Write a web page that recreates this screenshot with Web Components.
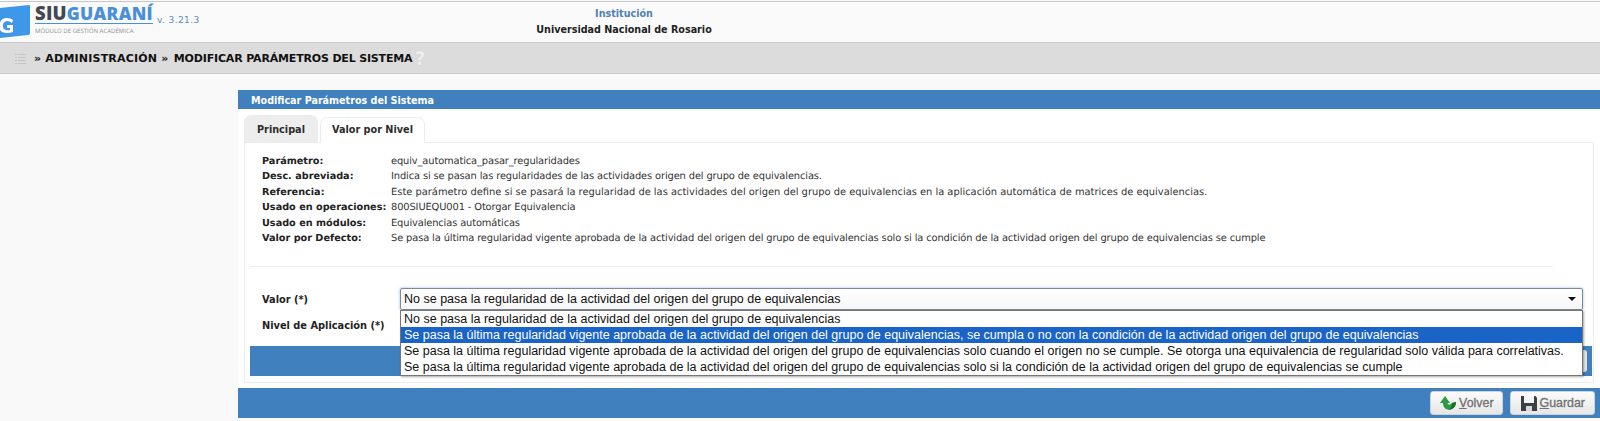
<!DOCTYPE html>
<html>
<head>
<meta charset="utf-8">
<title>Modificar Parámetros del Sistema</title>
<style>
  html, body { margin: 0; padding: 0; height: 421px; overflow: hidden; background: #f9f9f9; }
  body { font-family: "DejaVu Sans", Verdana, sans-serif; font-size: 10px; color: #222; }
</style>
</head>
<body>
<siu-header></siu-header>
<siu-crumbs></siu-crumbs>
<siu-panel>
  <siu-tabs></siu-tabs>
  <siu-box>
    <siu-info></siu-info>
    <siu-form></siu-form>
  </siu-box>
</siu-panel>

<script>
class SiuHeader extends HTMLElement {
  connectedCallback() {
    this.attachShadow({mode: 'open'}).innerHTML = `
      <style>
        :host {
          display: flex;
          height: 40px;
          margin-top: 1px;
          border-top: 1px solid #c8c8c8;
          background: #fafafa;
        }
        .brand { width: 474px; display: flex; align-items: flex-start; }
        svg { display: block; flex: none; margin-top: 1px; }
        .names { margin-left: 5px; width: 118px; }
        .name {
          font: 800 18.5px/19px "Open Sans", sans-serif;
          letter-spacing: .2px;
          color: #434852;
          height: 20px;
          padding-top: 1px;
          white-space: nowrap;
          border-bottom: 1px solid #4a90d9;
        }
        .name span { color: #4a90d9; font-size: 17.5px; letter-spacing: .3px; }
        .sub { font: 6.05px/12px "Open Sans", sans-serif; text-rendering: geometricPrecision; color: #8f8f8f; white-space: nowrap; margin-top: 1px; }
        .ver { margin: 13px 0 0 4px; font-size: 9px; color: #5b8fc0; letter-spacing: .4px; }
        .inst { width: 300px; text-align: center; font-weight: bold; font-size: 9.6px; padding-top: 5px; box-sizing: border-box; }
        .inst div:first-child { color: #4f81b3; height: 16px; line-height: 13px; }
        .inst div:last-child { color: #222; line-height: 13px; }
      </style>
      <div class="brand">
        <svg width="30" height="35" viewBox="0 0 30 35">
          <path d="M0 5 L29 2 Q30 2 30 3 L30 30 Q30 32 28 32 L0 35 Z" fill="#3f97ea"/>
          <path d="M13 17 Q11 15 7 15 Q1 15 0 20 L0 27 Q2 30 7 30 Q10 30 13 29 L13 22 L7 22 L7 25 L10 25 L10 27 Q4 28 3 24 Q2 19 7 18 Q10 18 12 20 Z" fill="#fff"/>
        </svg>
        <div class="names">
          <div class="name">SIU<span>GUARANÍ</span></div>
          <div class="sub">MÓDULO DE GESTIÓN ACADÉMICA</div>
        </div>
        <div class="ver">v. 3.21.3</div>
      </div>
      <div class="inst">
        <div>Institución</div>
        <div>Universidad Nacional de Rosario</div>
      </div>
    `;
  }
}
customElements.define('siu-header', SiuHeader);

class SiuCrumbs extends HTMLElement {
  connectedCallback() {
    this.attachShadow({mode: 'open'}).innerHTML = `
      <style>
        :host {
          display: flex;
          align-items: center;
          height: 30px;
          border-top: 1px solid #c9c9c9;
          border-bottom: 1px solid #c9c9c9;
          background: #dcdcdc;
          padding-left: 15px;
          font-weight: bold;
          font-size: 11px;
          color: #111;
          white-space: nowrap;
        }
        svg { display: block; margin-right: 8px; }
        .a { letter-spacing: .2px; }
        .b { letter-spacing: -.17px; margin-left: 4px; word-spacing: 0; }
        .b i { font-style: normal; margin-right: 2px; }
        .q { font: bold 19px/20px "DejaVu Sans", sans-serif; color: #eee; text-shadow: 0 0 1px #bbb; margin-left: 2px; }
      </style>
      <svg width="11" height="11" viewBox="0 0 11 11" fill="#c4c4c4">
        <rect x="0" y="1" width="2" height="1"/><rect x="3" y="1" width="8" height="1"/>
        <rect x="0" y="4" width="2" height="1"/><rect x="3" y="4" width="8" height="1"/>
        <rect x="0" y="7" width="2" height="1"/><rect x="3" y="7" width="8" height="1"/>
        <rect x="0" y="10" width="2" height="1"/><rect x="3" y="10" width="8" height="1"/>
      </svg>
      <span class="a">» ADMINISTRACIÓN</span><span class="b"><i>»</i> MODIFICAR PARÁMETROS DEL SISTEMA</span><span class="q">?</span>
    `;
  }
}
customElements.define('siu-crumbs', SiuCrumbs);

class SiuPanel extends HTMLElement {
  connectedCallback() {
    this.attachShadow({mode: 'open'}).innerHTML = `
      <style>
        :host { display: block; margin: 16px 0 0 238px; }
        .title {
          height: 19px;
          line-height: 22px;
          background: #4180be;
          color: #fff;
          font-weight: bold;
          font-size: 9.6px;
          padding-left: 13px;
        }
        .body {
          background: #fff;
          padding: 6px 6px 5px 6px;
        }
        .foot {
          height: 30px;
          background: #4180be;
          display: flex;
          justify-content: flex-end;
          align-items: center;
          gap: 7px;
          padding-right: 5px;
        }
      </style>
      <div class="title">Modificar Parámetros del Sistema</div>
      <div class="body"><slot></slot></div>
      <div class="foot">
        <siu-button label="Volver" key="V" icon="back"></siu-button>
        <siu-button label="Guardar" key="G" icon="save"></siu-button>
      </div>
    `;
  }
}
customElements.define('siu-panel', SiuPanel);

class SiuButton extends HTMLElement {
  connectedCallback() {
    const label = this.getAttribute('label');
    const key = this.getAttribute('key');
    const icons = {
      back: `<svg width="16" height="14" viewBox="0 0 16 14"><path d="M5 0 L10 7 L7.5 7 Q7.5 9 10 8.5 L12 7 L16 6 Q16 11 12 13 Q9 14.5 6 13 Q3 11 3 7 L0 7 Z" fill="#2c9a3e"/><path d="M16 6 Q16 11 12 13 Q10 14 8 13.8 Q12 12 12 7 Z" fill="#1c6f2b"/></svg>`,
      save: `<svg width="16" height="15" viewBox="0 0 16 15"><path d="M0 0 H3 V7 H13 V0 H14.5 L16 2 V15 H0 Z" fill="#3c3f44"/><rect x="5" y="10" width="6" height="5" fill="#d8d8d8"/></svg>`
    };
    this.attachShadow({mode: 'open'}).innerHTML = `
      <style>
        :host {
          display: flex;
          align-items: center;
          gap: 3px;
          height: 24px;
          padding: 0 9px 0 10px;
          box-sizing: border-box;
          background: linear-gradient(#fbfbfb, #e6e6e6);
          border: 1px solid #ccd3da;
          border-radius: 3px;
          color: #707070;
          font: 12.4px "Liberation Sans", Arial, sans-serif;
          -webkit-text-stroke: .3px #707070;
        }
        :host([icon="back"]) { padding: 0 8px 0 9px; }
        svg { display: block; }
        u { text-decoration: underline; }
      </style>
      ${icons[this.getAttribute('icon')]}
      <span><u>${key}</u>${label.slice(1)}</span>
    `;
  }
}
customElements.define('siu-button', SiuButton);

class SiuTabs extends HTMLElement {
  connectedCallback() {
    this.attachShadow({mode: 'open'}).innerHTML = `
      <style>
        :host {
          display: flex;
          align-items: flex-end;
          height: 27px;
          font-weight: bold;
          font-size: 9.7px;
          color: #2c2c2c;
          position: relative;
          z-index: 1;
        }
        div { box-sizing: border-box; border-radius: 7px 7px 0 0; text-align: center; }
        .off { width: 74px; height: 27px; background: #ededed; line-height: 30px; margin-right: 2px; }
        .on { width: 105px; background: #fff; border: 1px solid #ececec; border-bottom: 0; line-height: 24px; height: 26px; margin-bottom: -1px; }
      </style>
      <div class="off">Principal</div>
      <div class="on">Valor por Nivel</div>
    `;
  }
}
customElements.define('siu-tabs', SiuTabs);

class SiuBox extends HTMLElement {
  connectedCallback() {
    this.attachShadow({mode: 'open'}).innerHTML = `
      <style>
        :host {
          display: block;
          border: 1px solid #ececec;
          padding-bottom: 6px;
        }
      </style>
      <slot></slot>
    `;
  }
}
customElements.define('siu-box', SiuBox);

class SiuInfo extends HTMLElement {
  connectedCallback() {
    const rows = [
      ['Parámetro:', 'equiv_automatica_pasar_regularidades'],
      ['Desc. abreviada:', 'Indica si se pasan las regularidades de las actividades origen del grupo de equivalencias.'],
      ['Referencia:', 'Este parámetro define si se pasará la regularidad de las actividades del origen del grupo de equivalencias en la aplicación automática de matrices de equivalencias.', 'wide'],
      ['Usado en operaciones:', '800SIUEQU001 - Otorgar Equivalencia'],
      ['Usado en módulos:', 'Equivalencias automáticas'],
      ['Valor por Defecto:', 'Se pasa la última regularidad vigente aprobada de la actividad del origen del grupo de equivalencias solo si la condición de la actividad origen del grupo de equivalencias se cumple']
    ];
    this.attachShadow({mode: 'open'}).innerHTML = `
      <style>
        :host {
          display: grid;
          grid-template-columns: 129px 1fr;
          grid-auto-rows: 15.4px;
          padding: 11px 0 20px 12px;
          margin: 0 40px 0 5px;
          border-bottom: 1px solid #efefef;
          font-size: 9.9px;
          line-height: 15px;
          color: #333;
          white-space: nowrap;
          text-rendering: geometricPrecision;
        }
        b { color: #222; font-size: 9.7px; }
        span { letter-spacing: -.13px; }
        span.wide { letter-spacing: 0; }
      </style>
      ${rows.map(r => `<b>${r[0]}</b><span class="${r[2] || ''}">${r[1]}</span>`).join('')}
    `;
  }
}
customElements.define('siu-info', SiuInfo);

class SiuForm extends HTMLElement {
  connectedCallback() {
    const options = [
      'No se pasa la regularidad de la actividad del origen del grupo de equivalencias',
      'Se pasa la última regularidad vigente aprobada de la actividad del origen del grupo de equivalencias, se cumpla o no con la condición de la actividad origen del grupo de equivalencias',
      'Se pasa la última regularidad vigente aprobada de la actividad del origen del grupo de equivalencias solo cuando el origen no se cumple. Se otorga una equivalencia de regularidad solo válida para correlativas.',
      'Se pasa la última regularidad vigente aprobada de la actividad del origen del grupo de equivalencias solo si la condición de la actividad origen del grupo de equivalencias se cumple'
    ];
    this.attachShadow({mode: 'open'}).innerHTML = `
      <style>
        :host { display: block; position: relative; padding-top: 21px; }
        .row { display: flex; align-items: center; padding-left: 17px; font-size: 9.8px; font-weight: bold; color: #222; }
        .row label { width: 138px; flex: none; white-space: nowrap; }
        .row.value { height: 22px; }
        .row.level { height: 30px; margin-bottom: 6px; }
        .select {
          flex: 1;
          height: 22px;
          margin-right: 10px;
          box-sizing: border-box;
          border: 1px solid #7f8a99;
          border-radius: 2px;
          box-shadow: 0 0 3px #8fb8ea;
          background: linear-gradient(#fff, #f6f6f6);
          display: flex;
          align-items: center;
          justify-content: space-between;
          padding: 0 3px 0 3px;
          font: 500 12.5px "Liberation Sans", Arial, sans-serif;
          color: #111;
        }
        .arrow { width: 0; height: 0; border: 4px solid transparent; border-top: 4px solid #111; border-bottom: 0; margin-right: 3px; }
        .bar {
          height: 30px;
          margin: 0 1px 0 5px;
          background: #4180be;
          display: flex;
          justify-content: flex-end;
          align-items: center;
          padding-right: 5px;
        }
        .bar i { display: block; width: 12px; height: 22px; background: #e6e6e6; border-radius: 3px; }
        .list {
          position: absolute;
          left: 155px;
          right: 10px;
          top: 43px;
          background: #fff;
          border: 1px solid #767676;
          box-shadow: 1px 1px 2px rgba(0,0,0,.35);
          font: 12.5px/16px "Liberation Sans", Arial, sans-serif;
          color: #111;
          white-space: nowrap;
        }
        .list div { height: 16px; padding-left: 3px; }
        .list .sel { background: #1a63c7; color: #fff; }
      </style>
      <div class="row value"><label>Valor (*)</label>
        <div class="select"><span>${options[0]}</span><span class="arrow"></span></div>
      </div>
      <div class="row level"><label>Nivel de Aplicación (*)</label></div>
      <div class="bar"><i></i></div>
      <div class="list">
        ${options.map((o, i) => `<div class="${i == 1 ? 'sel' : ''}">${o}</div>`).join('')}
      </div>
    `;
  }
}
customElements.define('siu-form', SiuForm);
</script>
</body>
</html>
